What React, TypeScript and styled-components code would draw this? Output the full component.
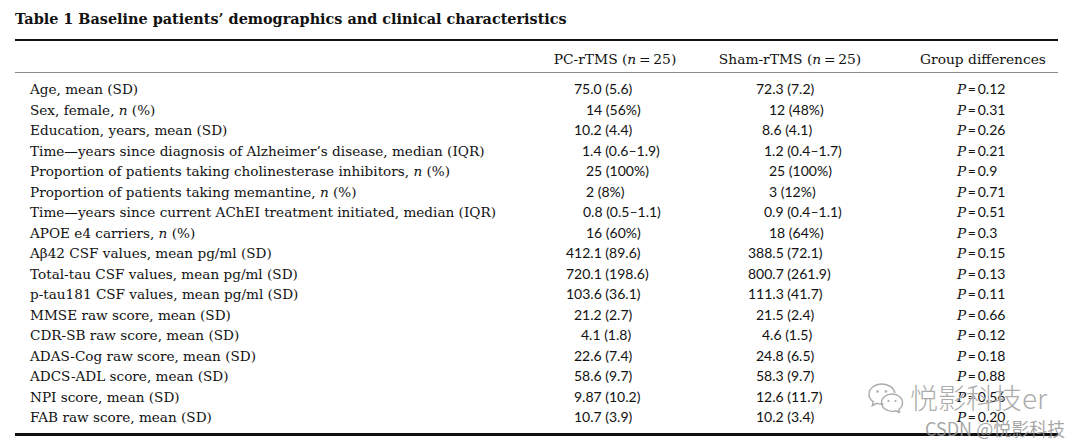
import React from 'react';
import styled, { createGlobalStyle } from 'styled-components';

const GlobalStyle = createGlobalStyle`
  html, body {
    margin: 0;
    padding: 0;
    background: #fff;
  }
  body {
    font-family: "DejaVu Serif", serif;
    color: #111;
  }
`;

const Page = styled.div`
  position: relative;
  width: 1080px;
  height: 447px;
  padding: 0 22px 0 15px;
  box-sizing: border-box;
  overflow: hidden;
`;

const Title = styled.h1`
  margin: 7px 0 8px;
  font-family: "DejaVu Serif", serif;
  font-weight: bold;
  font-size: 14.4px;
  line-height: 24px;
  color: #111;
`;

const Table = styled.div`
  border-top: 2px solid #111;
  border-bottom: 3px solid #111;
  padding-bottom: 5px;
`;

const Grid = styled.div`
  display: grid;
  grid-template-columns: 515px 170px 180px 178px;
`;

const HeadRow = styled(Grid)`
  padding: 8px 0 3px;
  border-bottom: 1px solid #8a8a8a;
  margin-bottom: 6px;
`;

const HeadCell = styled.div<{ $shift?: number }>`
  font-size: 13.8px;
  line-height: 20px;
  text-align: center;
  padding-left: ${p => (p.$shift ?? 0) * 2}px;
  white-space: nowrap;
`;

const Row = styled(Grid)`
  height: 20.5px;
  align-items: center;
`;

const Label = styled.div`
  padding-left: 15px;
  font-size: 13.6px;
  line-height: 20.5px;
  white-space: nowrap;
`;

const Value = styled.div<{ $base: number; $indent: number }>`
  padding-left: ${p => p.$base + p.$indent}px;
  font-family: Lato, "Liberation Sans", sans-serif;
  font-size: 14px;
  line-height: 20.5px;
  white-space: nowrap;
`;

const PValue = styled.div`
  padding-left: 77px;
  font-family: Lato, "Liberation Sans", sans-serif;
  font-size: 14px;
  line-height: 20.5px;
  white-space: nowrap;

  i {
    font-family: "DejaVu Serif", serif;
    font-size: 13.5px;
  }
`;

const Watermark = styled.div`
  position: absolute;
  left: 866px;
  top: 380px;
  display: flex;
  align-items: center;
  gap: 4px;
  pointer-events: none;
`;

const WaterText = styled.span`
  font-family: "Noto Sans CJK SC", "Noto Sans", sans-serif;
  font-weight: 300;
  font-size: 28px;
  line-height: 34px;
  color: rgba(150, 150, 150, 0.8);
  text-shadow: 0 0 1px #fff;
`;

const Credit = styled.div`
  position: absolute;
  left: 925px;
  top: 416px;
  font-family: "Noto Sans CJK SC", "Liberation Sans", sans-serif;
  font-size: 18px;
  line-height: 24px;
  color: rgba(150, 150, 150, 0.85);
  pointer-events: none;
`;

type Stat = [string, number];

const rows: { label: React.ReactNode; pc: Stat; sham: Stat; p: string }[] = [
  { label: 'Age, mean (SD)', pc: ['75.0 (5.6)', 0], sham: ['72.3 (7.2)', 0], p: '0.12' },
  { label: <>Sex, female, <i>n</i> (%)</>, pc: ['14 (56%)', 12], sham: ['12 (48%)', 13], p: '0.31' },
  { label: 'Education, years, mean (SD)', pc: ['10.2 (4.4)', 0], sham: ['8.6 (4.1)', 6], p: '0.26' },
  { label: 'Time\u2014years since diagnosis of Alzheimer\u2019s disease, median (IQR)', pc: ['1.4 (0.6\u20131.9)', 8], sham: ['1.2 (0.4\u20131.7)', 8], p: '0.21' },
  { label: <>Proportion of patients taking cholinesterase inhibitors, <i>n</i> (%)</>, pc: ['25 (100%)', 12], sham: ['25 (100%)', 13], p: '0.9' },
  { label: <>Proportion of patients taking memantine, <i>n</i> (%)</>, pc: ['2 (8%)', 12], sham: ['3 (12%)', 13], p: '0.71' },
  { label: 'Time\u2014years since current AChEI treatment initiated, median (IQR)', pc: ['0.8 (0.5\u20131.1)', 9], sham: ['0.9 (0.4\u20131.1)', 8], p: '0.51' },
  { label: <>APOE e4 carriers, <i>n</i> (%)</>, pc: ['16 (60%)', 12], sham: ['18 (64%)', 13], p: '0.3' },
  { label: 'A\u03b242 CSF values, mean pg/ml (SD)', pc: ['412.1 (89.6)', -8], sham: ['388.5 (72.1)', -8], p: '0.15' },
  { label: 'Total-tau CSF values, mean pg/ml (SD)', pc: ['720.1 (198.6)', -8], sham: ['800.7 (261.9)', -8], p: '0.13' },
  { label: 'p-tau181 CSF values, mean pg/ml (SD)', pc: ['103.6 (36.1)', -8], sham: ['111.3 (41.7)', -8], p: '0.11' },
  { label: 'MMSE raw score, mean (SD)', pc: ['21.2 (2.7)', 0], sham: ['21.5 (2.4)', 0], p: '0.66' },
  { label: 'CDR-SB raw score, mean (SD)', pc: ['4.1 (1.8)', 7], sham: ['4.6 (1.5)', 6], p: '0.12' },
  { label: 'ADAS-Cog raw score, mean (SD)', pc: ['22.6 (7.4)', 0], sham: ['24.8 (6.5)', 0], p: '0.18' },
  { label: 'ADCS-ADL score, mean (SD)', pc: ['58.6 (9.7)', 0], sham: ['58.3 (9.7)', 0], p: '0.88' },
  { label: 'NPI score, mean (SD)', pc: ['9.87 (10.2)', 0], sham: ['12.6 (11.7)', 0], p: '0.56' },
  { label: 'FAB raw score, mean (SD)', pc: ['10.7 (3.9)', 0], sham: ['10.2 (3.4)', 0], p: '0.20' },
];

const WeChatIcon = () => (
  <svg width="40" height="32" viewBox="0 0 40 32" fill="none" stroke="rgba(150,150,150,0.8)" strokeWidth="1.4">
    <path d="M16 3C8.5 3 3 7.8 3 13.2c0 3.1 1.7 5.8 4.4 7.6L6.3 24.6l4.5-2.3c1.6.5 3.3.8 5.2.8.5 0 1 0 1.5-.1" />
    <path d="M28.9 12.2C28.2 7 22.7 3 16 3" />
    <path d="M26 13c-6 0-10.5 4-10.5 8.7s4.5 8.7 10.5 8.7c1.4 0 2.7-.2 3.9-.6l3.7 1.9-.9-3.2c2.3-1.6 3.8-4 3.8-6.8C36.5 17 32 13 26 13z" />
    <circle cx="11.5" cy="10.5" r="1.3" fill="rgba(150,150,150,0.8)" stroke="none" />
    <circle cx="20" cy="10.5" r="1.3" fill="rgba(150,150,150,0.8)" stroke="none" />
    <circle cx="22.5" cy="20" r="1.1" fill="rgba(150,150,150,0.8)" stroke="none" />
    <circle cx="29.5" cy="20" r="1.1" fill="rgba(150,150,150,0.8)" stroke="none" />
  </svg>
);

export default function App() {
  return (
    <>
      <GlobalStyle />
      <Page>
        <Title>Table 1 Baseline patients’ demographics and clinical characteristics</Title>
        <Table>
          <HeadRow>
            <div />
            <HeadCell>PC-rTMS (<i>n</i>{'\u2009=\u2009'}25)</HeadCell>
            <HeadCell>Sham-rTMS (<i>n</i>{'\u2009=\u2009'}25)</HeadCell>
            <HeadCell $shift={14}>Group differences</HeadCell>
          </HeadRow>
          {rows.map((r, i) => (
            <Row key={i}>
              <Label>{r.label}</Label>
              <Value $base={44} $indent={r.pc[1]}>{r.pc[0]}</Value>
              <Value $base={56} $indent={r.sham[1]}>{r.sham[0]}</Value>
              <PValue><i>P</i>{'\u2009=\u2009'}{r.p}</PValue>
            </Row>
          ))}
        </Table>
        <Watermark>
          <WeChatIcon />
          <WaterText>悦影科技er</WaterText>
        </Watermark>
        <Credit>CSDN @悦影科技</Credit>
      </Page>
    </>
  );
}
